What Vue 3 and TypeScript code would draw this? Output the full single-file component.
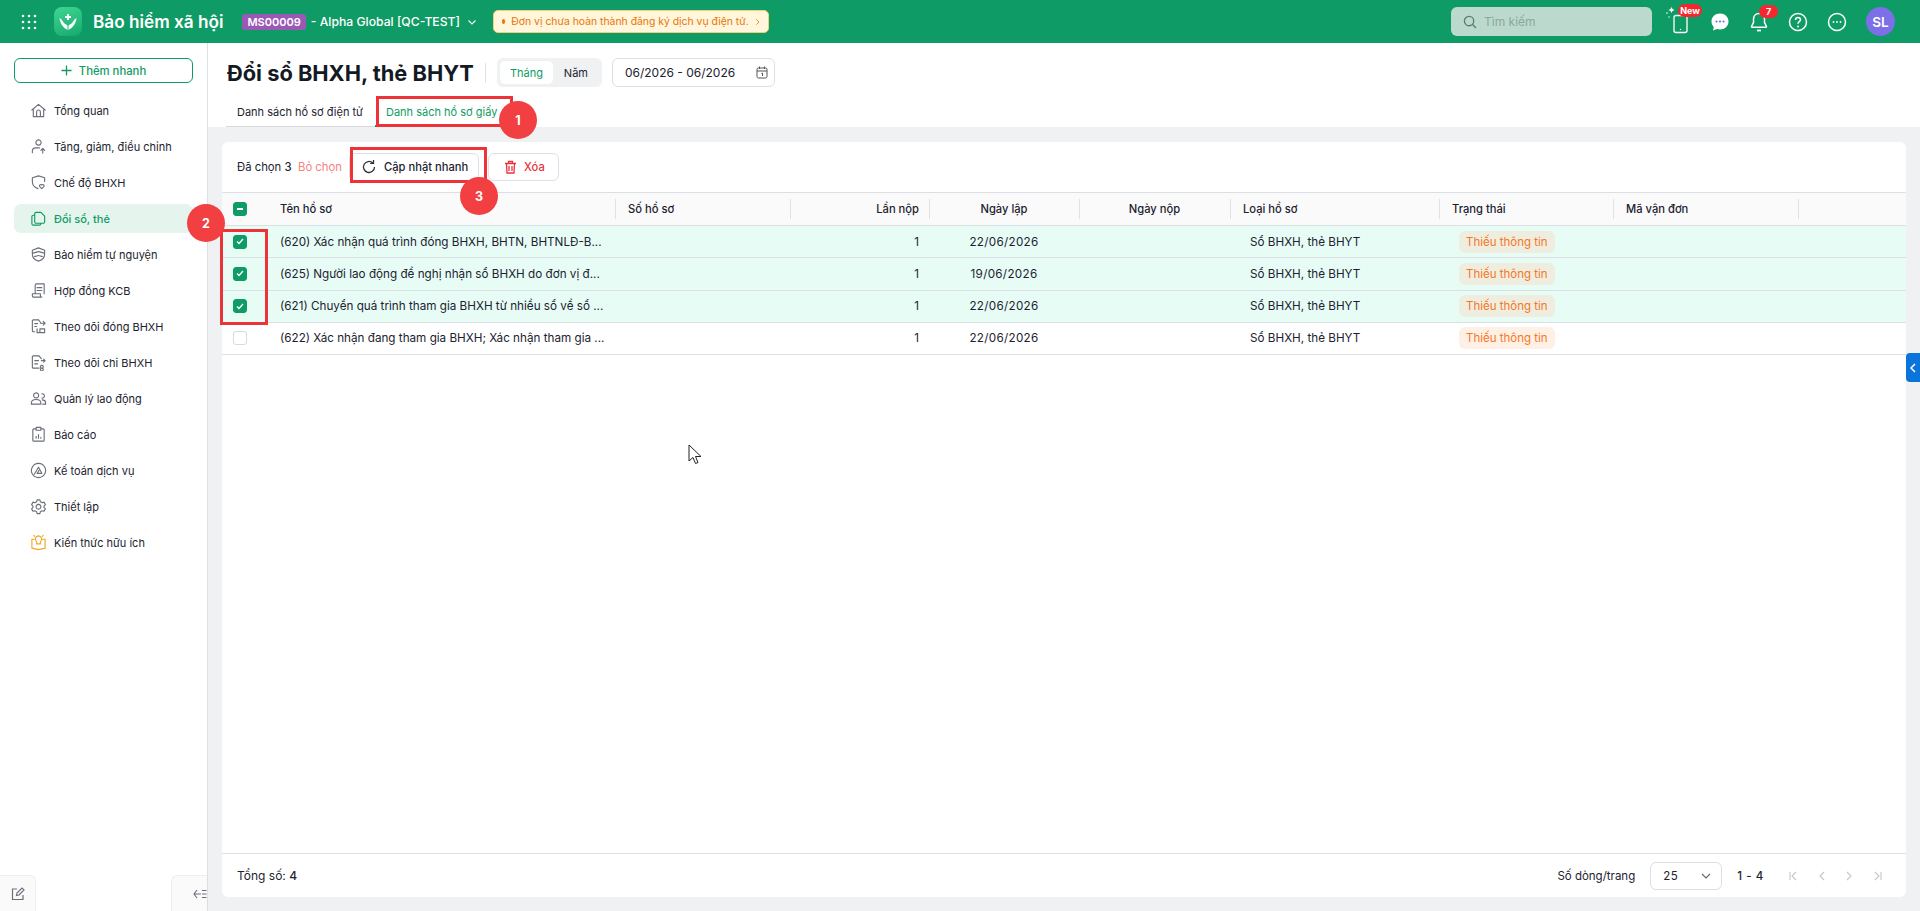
<template>
  <div class="app">
    <header class="topbar">
      <svg class="grid-icon" width="18" height="18" viewBox="0 0 18 18" fill="#fff">
        <template v-for="y in [3, 9, 15]" :key="y">
          <circle v-for="x in [3, 9, 15]" :key="x" :cx="x" :cy="y" r="1.3" />
        </template>
      </svg>
      <div class="logo">
        <svg width="20" height="20" viewBox="0 0 20 20" fill="#fff">
          <path d="M9 2h2v2h2v2h-2v2H9V6H7V4h2z" />
          <path d="M1.500 6c2.500 1 3 3.500 4.500 5s3 1.500 3.500 3v4C7 16.500 2 13 1.500 6z" />
          <path d="M18.500 6c-2.500 1-3 3.500-4.500 5s-3 1.500-3.500 3v4c2.500-1.500 7.500-5 8-12z" />
        </svg>
      </div>
      <span class="brand">Bảo hiểm xã hội</span>
      <span class="code">MS00009</span>
      <span class="company">- Alpha Global [QC-TEST]</span>
      <svg width="10" height="10" viewBox="0 0 10 10" fill="none" stroke="#fff" stroke-width="1.100"><path d="M1.500 3.500 5 7l3.500-3.500" /></svg>
      <div class="notice">
        <span class="dot"></span>
        <span>Đơn vị chưa hoàn thành đăng ký dịch vụ điện tử.</span>
        <svg width="8" height="10" viewBox="0 0 8 10" fill="none" stroke="#e8750a" stroke-width="1.200"><path d="M2 1l4 4-4 4" /></svg>
      </div>
      <div class="top-right">
        <div class="search">
          <svg width="14" height="14" viewBox="0 0 15 15" fill="none" stroke="#5a7a6e" stroke-width="1.400"><circle cx="6.500" cy="6.500" r="5" /><path d="M10.200 10.200 14 14" /></svg>
          <span>Tìm kiếm</span>
        </div>
        <div class="top-icons">
          <div class="top-icon phone">
            <svg width="26" height="30" viewBox="0 0 26 30" fill="none" stroke="#fff" stroke-width="1.300">
              <rect x="9" y="8.500" width="13" height="17" rx="2" />
              <circle cx="15.500" cy="22.500" r=".7" fill="#fff" stroke="none" />
              <path d="M6.500 0l1 2 2 1-2 1-1 2-1-2-2-1 2-1z" fill="#fff" stroke="none" />
              <circle cx="2" cy="6" r=".8" fill="#fff" stroke="none" />
              <circle cx="4" cy="10" r=".7" fill="#fff" stroke="none" />
            </svg>
            <span class="badge new">New</span>
          </div>
          <div class="top-icon">
            <svg width="20" height="20" viewBox="0 0 20 20">
              <path d="M10 1.500c4.800 0 8.500 3.500 8.500 8s-3.700 8-8.500 8c-1 0-2-.2-2.900-.5l-4.100 1.500.8-3.500C2.300 13.500 1.500 11.600 1.500 9.500c0-4.500 3.700-8 8.500-8z" fill="#fff" />
              <circle cx="6.500" cy="9.500" r="1" fill="#4a6cf7" />
              <circle cx="10" cy="9.500" r="1" fill="#4a6cf7" />
              <circle cx="13.500" cy="9.500" r="1" fill="#4a6cf7" />
            </svg>
          </div>
          <div class="top-icon">
            <svg width="20" height="22" viewBox="0 0 20 22" fill="none" stroke="#fff" stroke-width="1.500">
              <path d="M10 2.500c-3.500 0-5.500 2.700-5.500 5.800v3.200L2.500 15.500c0 .5.300.8.800.8h13.400c.5 0 .8-.3.800-.8l-2-4V8.300c0-3.100-2-5.800-5.500-5.800z" />
              <path d="M8 19.500h4" stroke-width="1.800" />
            </svg>
            <span class="badge count">7</span>
          </div>
          <div class="top-icon">
            <svg width="20" height="20" viewBox="0 0 20 20" fill="none" stroke="#fff" stroke-width="1.500">
              <circle cx="10" cy="10" r="8.500" />
              <path d="M7.500 8c0-1.500 1.100-2.500 2.500-2.500s2.500 1 2.500 2.300c0 1.800-2.500 2-2.500 4" />
              <circle cx="10" cy="14.500" r=".9" fill="#fff" stroke="none" />
            </svg>
          </div>
          <div class="top-icon">
            <svg width="20" height="20" viewBox="0 0 20 20" fill="none" stroke="#fff" stroke-width="1.500">
              <circle cx="10" cy="10" r="8.500" />
              <circle cx="6.500" cy="10" r=".9" fill="#fff" stroke="none" />
              <circle cx="10" cy="10" r=".9" fill="#fff" stroke="none" />
              <circle cx="13.500" cy="10" r=".9" fill="#fff" stroke="none" />
            </svg>
          </div>
          <div class="avatar">SL</div>
        </div>
      </div>
    </header>

    <div class="body">
      <aside class="sidebar">
        <button class="quick-add">
          <svg width="11" height="11" viewBox="0 0 12 12" stroke="#0f9b65" stroke-width="1.400"><path d="M6 .5v11M.5 6h11" /></svg>
          Thêm nhanh
        </button>
        <nav class="menu">
          <a v-for="item in menu" :key="item.label" class="menu-item" :class="{ active: item.active, warm: item.warm }">
            <svg width="17" height="17" viewBox="0 0 18 18" fill="none" stroke="currentColor" stroke-width="1.200" stroke-linecap="round" stroke-linejoin="round">
              <path :d="item.icon" />
            </svg>
            <span>{{ item.label }}</span>
          </a>
        </nav>
        <div class="side-foot">
          <div class="foot-btn left">
            <svg width="16" height="16" viewBox="0 0 16 16" fill="none" stroke="#6b7078" stroke-width="1.200"><path d="M7 3H2.500v10.500H13V9M6.500 9.500l.5-2.500 5-5 2 2-5 5z" /></svg>
          </div>
          <div class="foot-btn right">
            <svg width="14" height="10" viewBox="0 0 14 10" fill="none" stroke="#6b7078" stroke-width="1.100"><path d="M4 1 1 5l3 4M1 5h7M9 1.500h4.500M9 5h4.500M9 8.500h4.500" /></svg>
          </div>
        </div>
      </aside>

      <main class="content">
        <section class="head">
          <div class="title-row">
            <h1>Đổi sổ BHXH, thẻ BHYT</h1>
            <span class="divider"></span>
            <div class="segment">
              <span class="seg on">Tháng</span>
              <span class="seg">Năm</span>
            </div>
            <div class="date-range">
              <span>06/2026 - 06/2026</span>
              <svg width="12" height="13" viewBox="0 0 12 13" fill="none" stroke="#555" stroke-width="1"><rect x="1" y="2" width="10" height="10" rx="1.500" /><path d="M1 5h10M3.500 .5v2.500M8.500 .5v2.500M5.500 7.500 6.500 7v3" /></svg>
            </div>
          </div>
          <div class="tabs">
            <span class="tab">Danh sách hồ sơ điện tử</span>
            <span class="tab on">Danh sách hồ sơ giấy</span>
          </div>
        </section>

        <section class="panel-wrap">
          <div class="panel">
            <div class="toolbar">
              <span class="pick-count">Đã chọn <b>3</b></span>
              <span class="unpick">Bỏ chọn</span>
              <button class="btn refresh">
                <svg width="16" height="16" viewBox="0 0 16 16" fill="none" stroke="#333" stroke-width="1.300"><path d="M13.500 8a5.500 5.500 0 1 1-1.700-4" /><path d="M12.500 1v3.300H9.200" /></svg>
                Cập nhật nhanh
              </button>
              <button class="btn danger">
                <svg width="13" height="14" viewBox="0 0 13 14" fill="none" stroke="#e8333c" stroke-width="1.300"><path d="M1 3.500h11M4.500 3V1.500h4V3M2.500 3.500l.5 9.500h7l.5-9.500M5 6v5M8 6v5" /></svg>
                Xóa
              </button>
            </div>

            <div class="table">
              <div class="row head-row">
                <div class="cell c-check"><span class="check mixed"></span></div>
                <div class="cell c-name"><span>Tên hồ sơ</span></div>
                <div class="cell c-no"><span>Số hồ sơ</span></div>
                <div class="cell c-times right"><span>Lần nộp</span></div>
                <div class="cell c-made center"><span>Ngày lập</span></div>
                <div class="cell c-sent center"><span>Ngày nộp</span></div>
                <div class="cell c-type"><span>Loại hồ sơ</span></div>
                <div class="cell c-status"><span>Trạng thái</span></div>
                <div class="cell c-track"><span>Mã vận đơn</span></div>
              </div>
              <div v-for="r in rows" :key="r.name" class="row" :class="{ picked: r.checked }">
                <div class="cell c-check">
                  <span class="check" :class="{ on: r.checked }">
                    <svg v-if="r.checked" width="8" height="7" viewBox="0 0 8 7" fill="none" stroke="#fff" stroke-width="1.300"><path d="M1 3.500 3 5.500 7 1" /></svg>
                  </span>
                </div>
                <div class="cell c-name"><span>{{ r.name }}</span></div>
                <div class="cell c-no"></div>
                <div class="cell c-times right"><span>1</span></div>
                <div class="cell c-made center"><span class="date">{{ r.date }}</span></div>
                <div class="cell c-sent"></div>
                <div class="cell c-type indent"><span>Sổ BHXH, thẻ BHYT</span></div>
                <div class="cell c-status indent"><span class="tag">Thiếu thông tin</span></div>
                <div class="cell c-track"></div>
              </div>
            </div>

            <div class="pager">
              <span class="total">Tổng số: <b>4</b></span>
              <div class="pager-right">
                <span>Số dòng/trang</span>
                <div class="size">
                  <span>25</span>
                  <svg width="10" height="6" viewBox="0 0 10 6" fill="none" stroke="#666" stroke-width="1.100"><path d="M1 1l4 4 4-4" /></svg>
                </div>
                <span class="range">1 - 4</span>
                <div class="pages">
                  <svg width="8" height="10" viewBox="0 0 8 10" fill="none" stroke="#c4c7cc" stroke-width="1.100"><path d="M1 1v8M7 1 3 5l4 4" /></svg>
                  <svg width="6" height="10" viewBox="0 0 6 10" fill="none" stroke="#c4c7cc" stroke-width="1.100"><path d="M5 1 1 5l4 4" /></svg>
                  <svg width="6" height="10" viewBox="0 0 6 10" fill="none" stroke="#c4c7cc" stroke-width="1.100"><path d="m1 1 4 4-4 4" /></svg>
                  <svg width="8" height="10" viewBox="0 0 8 10" fill="none" stroke="#c4c7cc" stroke-width="1.100"><path d="M7 1v8M1 1l4 4-4 4" /></svg>
                </div>
              </div>
            </div>
          </div>
        </section>
      </main>
    </div>

    <!-- annotations drawn over the page -->
    <div class="mark box-tab"></div>
    <div class="mark box-checks"></div>
    <div class="mark box-refresh"></div>
    <span class="pin pin-1">1</span>
    <span class="pin pin-2">2</span>
    <span class="pin pin-3">3</span>

    <div class="side-handle">
      <svg width="6" height="10" viewBox="0 0 6 10" fill="none" stroke="#fff" stroke-width="1.500"><path d="M5 1 1 5l4 4" /></svg>
    </div>
    <svg class="cursor" width="14" height="21" viewBox="0 0 14 21">
      <path d="M1 1v16l4-3.500 2.500 6 2.500-1-2.500-6H13z" fill="#fff" stroke="#222" stroke-width="1" />
    </svg>
  </div>
</template>

<script setup lang="ts">
interface MenuItem {
  label: string;
  icon: string;
  active?: boolean;
  warm?: boolean;
}

interface Row {
  name: string;
  date: string;
  checked: boolean;
}

const menu: MenuItem[] = [
  { label: 'Tổng quan', icon: 'M2 8.500 9 2.500l7 6M3.500 7.500V15.500h11V7.500M7 15.500V10.500a2 2 0 0 1 4 0v5' },
  { label: 'Tăng, giảm, điều chỉnh', icon: 'M9 2a2.800 2.800 0 1 0 .01 0M2.500 15.500v-1.500c0-2 1.500-3.500 3.500-3.500h4M13.500 16v-5M11.500 13l2-2 2 2' },
  { label: 'Chế độ BHXH', icon: 'M8.500 15.500C5 14.500 2.500 12 2.500 8V4L9 2l6.500 2v4M12.500 15.500l-2.200-2.200a1.300 1.300 0 0 1 2.200-1.500 1.300 1.300 0 0 1 2.200 1.500z' },
  { label: 'Đổi sổ, thẻ', icon: 'M6.500 2.500h5l4 4v6a1.500 1.500 0 0 1-1.500 1.500H6.500A1.500 1.500 0 0 1 5 12.500V4a1.500 1.500 0 0 1 1.500-1.500zM5 5.500H3.500A1.500 1.500 0 0 0 2 7v7.500A1.500 1.500 0 0 0 3.500 16H10a1.500 1.500 0 0 0 1.500-1.500V14', active: true },
  { label: 'Bảo hiểm tự nguyện', icon: 'M9 2l6.500 2.500v4C15.500 12.500 12.500 15 9 16c-3.500-1-6.500-3.500-6.500-7.500v-4zM3 7.500C5 7.500 7 6 9 6s4 1.500 6 1.500M5 11c1.500 0 2.500-1 4-1s2.500 1 4 1' },
  { label: 'Hợp đồng KCB', icon: 'M5.500 12.500V3.500A1.500 1.500 0 0 1 7 2h8v2M15 4v8.500M7.500 6h5M7.500 9h5M2.500 12.500H11v2a1.500 1.500 0 0 0 1.500 1.500h-9A1.500 1.500 0 0 1 2.500 14.500z' },
  { label: 'Theo dõi đóng BHXH', icon: 'M9 2H3.500A1 1 0 0 0 2.500 3v10.500a1 1 0 0 0 1 1H5M9 2l2 2.500M5 6h3M5 9h2M11 5.500h5M14 3.500l2 2-2 2M7.500 11.500v4h2M10.500 11.500h5v4h-5z' },
  { label: 'Theo dõi chi BHXH', icon: 'M9.500 2H3.500A1 1 0 0 0 2.500 3v11a1 1 0 0 0 1 1h6M9.500 2l2.500 3M5 7h4M5 10.500h3M12 7h4M14.500 5.500 16 7l-1.500 1.500M12.500 12a1.500 1.500 0 1 0 .01 0M12.500 15a1.500 1.500 0 1 0 .01 0' },
  { label: 'Quản lý lao động', icon: 'M6.500 3a2.700 2.700 0 1 0 .01 0M1.500 15v-1.500c0-2 2-3.500 5-3.500s5 1.500 5 3.500V15zM12.500 4a2.300 2.300 0 1 1 0 4.500M13 10.500c2 .2 3.500 1.500 3.500 3V15h-3' },
  { label: 'Báo cáo', icon: 'M6.500 3H4A1 1 0 0 0 3 4v11a1 1 0 0 0 1 1h10a1 1 0 0 0 1-1V4a1 1 0 0 0-1-1h-2.500M6.500 1.500h5v3h-5zM6.500 13v-2M9 13V9M11.500 13v-1' },
  { label: 'Kế toán dịch vụ', icon: 'M9 1.500a7.500 7.500 0 1 0 .01 0M4.500 13 9 5.500l3.500 6.500H7.500l2-3' },
  { label: 'Thiết lập', icon: 'M7.500 2h3l.5 2 1.800 1 2-.6 1.500 2.600-1.500 1.500v1.500l1.500 1.500-1.500 2.600-2-.6L11 14.500l-.5 2h-3l-.5-2-1.800-1-2 .6L1.700 11.500 3.200 10V8.500L1.700 7l1.500-2.600 2 .6L7 4zM9 6.800a2.500 2.500 0 1 0 .01 0' },
  { label: 'Kiến thức hữu ích', icon: 'M2 5.500h2.500M13.500 5.500H16M2 5.500V15l7 1.500L16 15V5.500M9 2a3.500 3.500 0 0 0-2 6.300V10.500h4V8.300A3.500 3.500 0 0 0 9 2zM4 1.500l1 1M14 1.500l-1 1', warm: true },
];

const rows: Row[] = [
  { name: '(620) Xác nhận quá trình đóng BHXH, BHTN, BHTNLĐ-B...', date: '22/06/2026', checked: true },
  { name: '(625) Người lao động đề nghị nhận sổ BHXH do đơn vị đ...', date: '19/06/2026', checked: true },
  { name: '(621) Chuyển quá trình tham gia BHXH từ nhiều sổ về sổ ...', date: '22/06/2026', checked: true },
  { name: '(622) Xác nhận đang tham gia BHXH; Xác nhận tham gia ...', date: '22/06/2026', checked: false },
];
</script>

<style>
html,
body {
  margin: 0;
  background: #fff;
}
</style>

<style scoped>
.app {
  position: relative;
  width: 1920px;
  height: 911px;
  overflow: hidden;
  display: flex;
  flex-direction: column;
  font-family: Inter, 'Noto Sans', sans-serif;
  font-size: 12px;
  color: #1c2330;
}

/* top bar */
.topbar {
  flex: none;
  height: 43px;
  background: #0f9b65;
  display: flex;
  align-items: center;
  padding: 0 25px 0 20px;
  color: #fff;
}
.grid-icon {
  margin-right: 16px;
}
.logo {
  width: 28px;
  height: 29px;
  border-radius: 8px;
  background: linear-gradient(160deg, #3dd890, #17a86f);
  display: flex;
  align-items: center;
  justify-content: center;
  margin-right: 11px;
}
.brand {
  font-size: 17.2px;
  font-weight: 600;
  margin-right: 19px;
  white-space: nowrap;
}
.code {
  background: #9b59b6;
  border-radius: 3px;
  padding: 1px 5px;
  font-size: 11px;
  font-weight: 600;
  margin-right: 5px;
}
.company {
  font-size: 12.2px;
  font-weight: 500;
  margin-right: 7px;
  white-space: nowrap;
}
.notice {
  margin-left: 16px;
  height: 23px;
  width: 276px;
  box-sizing: border-box;
  display: flex;
  align-items: center;
  gap: 6px;
  padding: 0 8px;
  border-radius: 5px;
  background: #fff6dc;
  border: 1px solid #f5cf76;
  color: #e8750a;
  font-size: 10.4px;
  white-space: nowrap;
}
.dot {
  width: 5px;
  height: 5px;
  border-radius: 50%;
  background: #e8750a;
}
.top-right {
  margin-left: auto;
  display: flex;
  align-items: center;
  gap: 13px;
}
.search {
  width: 201px;
  height: 29px;
  box-sizing: border-box;
  background: #bcd9ce;
  border-radius: 6px;
  display: flex;
  align-items: center;
  gap: 7px;
  padding: 0 12px;
  color: #8aa89c;
}
.top-icons {
  display: flex;
  align-items: center;
  gap: 19px;
}
.top-icon {
  position: relative;
  display: flex;
  width: 20px;
  justify-content: center;
}
.phone {
  width: 26px;
}
.badge {
  position: absolute;
  background: #f5262e;
  color: #fff;
  font-size: 9px;
  font-weight: 700;
  line-height: 13px;
  border-radius: 7px;
  text-align: center;
}
.badge.new {
  top: -3px;
  left: 13px;
  width: 24px;
}
.badge.count {
  top: -6px;
  left: 10px;
  width: 19px;
}
.avatar {
  width: 29px;
  height: 29px;
  border-radius: 50%;
  background: #7c6fe8;
  display: flex;
  align-items: center;
  justify-content: center;
  font-size: 13.5px;
  font-weight: 600;
}

/* sidebar */
.body {
  flex: 1;
  min-height: 0;
  display: flex;
}
.sidebar {
  flex: none;
  width: 208px;
  box-sizing: border-box;
  border-right: 1px solid #dcdfe3;
  display: flex;
  flex-direction: column;
  padding: 15px 14px 0;
}
.quick-add {
  height: 25px;
  width: 179px;
  box-sizing: border-box;
  border: 1px solid #0f9b65;
  border-radius: 6px;
  background: #fff;
  color: #0f9b65;
  font: inherit;
  font-size: 11.3px;
  font-weight: 500;
  display: flex;
  align-items: center;
  justify-content: center;
  gap: 7px;
  padding: 0;
  margin-bottom: 13px;
}
.menu {
  display: flex;
  flex-direction: column;
  gap: 7px;
}
.menu-item {
  height: 29px;
  width: 179px;
  box-sizing: border-box;
  display: flex;
  align-items: center;
  gap: 7px;
  padding-left: 16px;
  border-radius: 7px;
  font-size: 11px;
  color: #6b7078;
  white-space: nowrap;
}
.menu-item span {
  color: #1c2330;
}
.menu-item.active {
  background: #e6f4ee;
  color: #0f9b65;
}
.menu-item.active span {
  color: #0f9b65;
  font-weight: 500;
}
.menu-item.warm {
  color: #f5a623;
}
.side-foot {
  margin: auto -14px 0;
  display: flex;
  justify-content: space-between;
}
.foot-btn {
  height: 36px;
  background: #fafafb;
  border: 1px solid #eceef0;
  border-bottom: none;
  display: flex;
  align-items: center;
  justify-content: center;
  box-sizing: border-box;
}
.foot-btn.left {
  width: 36px;
  border-left: none;
  border-top-right-radius: 6px;
}
.foot-btn.right {
  width: 36px;
  border-right: none;
  border-top-left-radius: 6px;
}

/* page head */
.content {
  flex: 1;
  min-width: 0;
  display: flex;
  flex-direction: column;
}
.head {
  flex: none;
  height: 84px;
  box-sizing: border-box;
  padding: 15px 0 0 18px;
  display: flex;
  flex-direction: column;
}
.title-row {
  display: flex;
  align-items: center;
  height: 29px;
}
h1 {
  margin: 0 0 0 1px;
  font-size: 21.8px;
  font-weight: 700;
  color: #141a24;
  white-space: nowrap;
}
.divider {
  width: 1px;
  height: 20px;
  background: #e0e2e6;
  margin: 0 11px 0 11px;
}
.segment {
  display: flex;
  width: 105px;
  height: 29px;
  box-sizing: border-box;
  padding: 3px;
  background: #f0f1f3;
  border-radius: 6px;
  margin-right: 10px;
}
.seg {
  flex: 1;
  display: flex;
  align-items: center;
  justify-content: center;
  font-size: 11px;
}
.seg.on {
  flex: none;
  width: 53px;
  background: #fff;
  border-radius: 5px;
  color: #0f9b65;
}
.date-range {
  width: 163px;
  height: 29px;
  box-sizing: border-box;
  border: 1px solid #dcdfe3;
  border-radius: 6px;
  display: flex;
  align-items: center;
  justify-content: space-between;
  padding: 0 6px 0 12px;
  white-space: nowrap;
}
.tabs {
  display: flex;
  margin-top: 10px;
  height: 30px;
}
.tab {
  width: 149px;
  height: 30px;
  box-sizing: border-box;
  padding: 8px 0 0 11px;
  border-bottom: 1px solid #d7dade;
  white-space: nowrap;
  font-size: 11px;
}
.tab.on {
  width: 138px;
  color: #0f9b65;
  border-bottom: 2px solid #0f9b65;
}

/* table panel */
.panel-wrap {
  flex: 1;
  min-height: 0;
  background: #f0f1f3;
  padding: 15px 14px 14px;
}
.panel {
  height: 100%;
  background: #fff;
  border-radius: 6px;
  display: flex;
  flex-direction: column;
}
.toolbar {
  flex: none;
  height: 50px;
  display: flex;
  align-items: center;
  padding-left: 15px;
  font-size: 11.3px;
  white-space: nowrap;
}
.pick-count {
  width: 61px;
}
.pick-count b {
  font-weight: 500;
}
.unpick {
  width: 51px;
  color: #f4837f;
}
.btn {
  height: 28px;
  box-sizing: border-box;
  background: #fff;
  border: 1px solid #dcdfe3;
  border-radius: 6px;
  display: flex;
  align-items: center;
  font: inherit;
  font-size: 11.2px;
  font-weight: 500;
  white-space: nowrap;
  padding: 0;
}
.btn.refresh {
  width: 130px;
  gap: 7px;
  padding-left: 11px;
  margin-right: 9px;
  color: #1c2330;
}
.btn.danger {
  width: 71px;
  gap: 7px;
  padding-left: 15px;
  color: #e8333c;
}
.table {
  flex: 1;
  min-height: 0;
  border-top: 1px solid #dcdfe3;
}
.row {
  display: flex;
  height: 31.25px;
  border-bottom: 1px solid #dcdfe3;
  align-items: stretch;
}
.row.picked {
  background: #e8fcf6;
}
.head-row {
  height: 32px;
  background: #fafafa;
  font-weight: 500;
  font-size: 11.2px;
}
.cell {
  box-sizing: border-box;
  display: flex;
  align-items: center;
  min-width: 0;
  padding: 0 13px;
  white-space: nowrap;
}
.row:not(.head-row) .cell {
  font-size: 11.7px;
}
.head-row .cell:not(.c-check) {
  position: relative;
}
.head-row .cell:not(.c-check):not(.c-name)::before,
.head-row .c-track::after {
  content: '';
  position: absolute;
  left: 0;
  top: 6px;
  bottom: 6px;
  width: 1px;
  background: #e0e2e6;
}
.head-row .c-track::after {
  left: auto;
  right: 0;
}
.c-check {
  width: 58px;
  flex: none;
  padding: 0 0 0 11px;
}
.c-name {
  width: 335px;
  flex: none;
  padding: 0;
}
.c-no {
  width: 174.5px;
  flex: none;
}
.c-times {
  width: 139.5px;
  flex: none;
  padding-right: 10px;
}
.c-made {
  width: 150px;
  flex: none;
  padding: 0;
}
.c-sent {
  width: 151px;
  flex: none;
  padding: 0;
}
.c-type {
  width: 209px;
  flex: none;
}
.c-status {
  width: 174px;
  flex: none;
}
.c-track {
  width: 186px;
  flex: none;
}
.right {
  justify-content: flex-end;
}
.center {
  justify-content: center;
}
.indent {
  padding-left: 20px;
}
.date {
  letter-spacing: 0.3px;
}
.check {
  width: 14px;
  height: 14px;
  box-sizing: border-box;
  border-radius: 3px;
  border: 1px solid #d7dade;
  background: #fff;
  display: flex;
  align-items: center;
  justify-content: center;
}
.check.on,
.check.mixed {
  background: #0f9b65;
  border-color: #0f9b65;
}
.check.mixed::after {
  content: '';
  width: 6px;
  height: 1.5px;
  background: #fff;
}
.tag {
  display: inline-block;
  height: 22px;
  line-height: 22px;
  padding: 0 7px;
  border-radius: 6px;
  background: #fff0e6;
  color: #f5781f;
  font-size: 11.5px;
}
.row.picked .tag {
  background: #efede0;
}
.pager {
  flex: none;
  height: 43px;
  border-top: 1px solid #dcdfe3;
  display: flex;
  align-items: center;
  justify-content: space-between;
  padding: 0 24px 0 15px;
  font-size: 11.5px;
}
.total {
  font-size: 12px;
}
.total b {
  font-weight: 500;
}
.pager-right {
  display: flex;
  align-items: center;
}
.size {
  width: 72px;
  height: 28px;
  box-sizing: border-box;
  margin-left: 15px;
  border: 1px solid #dcdfe3;
  border-radius: 6px;
  display: flex;
  align-items: center;
  justify-content: space-between;
  padding: 0 10px 0 12px;
  letter-spacing: 0.4px;
}
.range {
  margin-left: 15px;
  font-weight: 500;
  letter-spacing: 0.6px;
  white-space: nowrap;
}
.pages {
  margin-left: 25px;
  width: 93px;
  display: flex;
  align-items: center;
  justify-content: space-between;
}

/* overlays */
.mark {
  position: absolute;
  box-sizing: border-box;
  border: 3px solid #ee3338;
  pointer-events: none;
}
.box-tab {
  left: 376px;
  top: 96px;
  width: 137px;
  height: 31px;
}
.box-checks {
  left: 220px;
  top: 229px;
  width: 48px;
  height: 96px;
}
.box-refresh {
  left: 350px;
  top: 147px;
  width: 137px;
  height: 36px;
}
.pin {
  position: absolute;
  width: 38px;
  height: 38px;
  border-radius: 50%;
  background: #f23f42;
  color: #fff;
  font-size: 12.5px;
  font-weight: 700;
  display: flex;
  align-items: center;
  justify-content: center;
}
.pin-1 {
  left: 499px;
  top: 101px;
}
.pin-2 {
  left: 187px;
  top: 204px;
}
.pin-3 {
  left: 460px;
  top: 177px;
}
.side-handle {
  position: absolute;
  left: 1906px;
  top: 353px;
  width: 14px;
  height: 29px;
  background: #0a74da;
  border-radius: 4px 0 0 4px;
  display: flex;
  align-items: center;
  justify-content: center;
}
.cursor {
  position: absolute;
  left: 688px;
  top: 444px;
}
</style>
